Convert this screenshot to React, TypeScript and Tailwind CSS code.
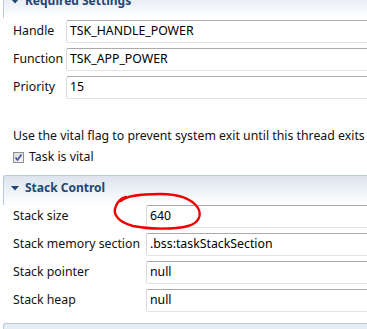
import React from "react";

const font = { fontFamily: '"Noto Sans", "Liberation Sans", sans-serif' };

function Header({ title }: { title: string }) {
  return (
    <div className="ml-[3px] h-[30px] rounded-tl-[3px] border-l border-t border-[#b7c9de] bg-gradient-to-b from-[#dce4ee] to-[#ffffff] flex items-start pt-[3px]">
      <svg width="8" height="5" viewBox="0 0 8 5" className="ml-[7px] mt-[7px]">
        <path d="M0 0 L8 0 L4 4.5 Z" fill="#23466f" />
      </svg>
      <span className="ml-[6px] text-[12px] font-bold text-[#1f4675] leading-[18px]">{title}</span>
    </div>
  );
}

function Row({ label, value, labelW }: { label: string; value: string; labelW: string }) {
  return (
    <div className="flex items-center h-[23px]">
      <div className={`${labelW} shrink-0 text-[12.3px] text-[#111] leading-none`}>{label}</div>
      <div className="flex-1 h-[23px] rounded-[2px] border border-[#dadada] border-t-[#ababab] border-b-[#e3e3e3] bg-white flex items-center pl-[3px] text-[12.3px] text-black leading-none">
        {value}
      </div>
    </div>
  );
}

export default function App() {
  return (
    <div className="w-[367px] h-[329px] overflow-hidden bg-white relative" style={font}>
      <div className="w-[420px] -mt-[12px]">
        <Header title="Required Settings" />
        <div className="pl-[13px] mt-[2px] flex flex-col gap-[5px]">
          <Row label="Handle" value="TSK_HANDLE_POWER" labelW="w-[53px]" />
          <Row label="Function" value="TSK_APP_POWER" labelW="w-[53px]" />
          <Row label="Priority" value="15" labelW="w-[53px]" />
        </div>
        <div className="pl-[13px] mt-[28px] text-[12.3px] text-[#111] leading-[18px] whitespace-nowrap">
          Use the vital flag to prevent system exit until this thread exits
        </div>
        <div className="pl-[13px] mt-[3px] flex items-center h-[18px]">
          <div className="w-[11px] h-[11px] border border-[#8e8f8f] bg-gradient-to-br from-[#dcdcdc] to-[#f6f6f6] flex items-center justify-center">
            <svg width="9" height="9" viewBox="0 0 9 9">
              <path d="M1.5 4.5 L3.5 7 L7.5 1.5" stroke="#3a4f9a" strokeWidth="1.6" fill="none" />
            </svg>
          </div>
          <span className="ml-[5px] text-[12.3px] text-[#111] leading-none">Task is vital</span>
        </div>
        <div className="mt-[9px]">
          <Header title="Stack Control" />
        </div>
        <div className="pl-[13px] flex flex-col gap-[5px]">
          <Row label="Stack size" value="640" labelW="w-[133px]" />
          <Row label="Stack memory section" value=".bss:taskStackSection" labelW="w-[133px]" />
          <Row label="Stack pointer" value="null" labelW="w-[133px]" />
          <Row label="Stack heap" value="null" labelW="w-[133px]" />
        </div>
        <div className="mt-[11px] ml-[3px] h-[20px] rounded-tl-[3px] border-l border-t border-[#b7c9de] bg-[#e6ecf4]" />
      </div>
      <svg className="absolute left-0 top-0 pointer-events-none" width="367" height="329" viewBox="0 0 367 329">
        <path
          d="M121 201 C126 196 140 194 160 194 C178 194 192 199 198 208 C202 215 199 223 188 226 C172 230 148 229 133 226 C118 222 112 214 116 206 C118 201 122 198 126 197"
          stroke="#f00000"
          strokeWidth="2.4"
          fill="none"
          strokeLinecap="round"
        />
      </svg>
    </div>
  );
}
